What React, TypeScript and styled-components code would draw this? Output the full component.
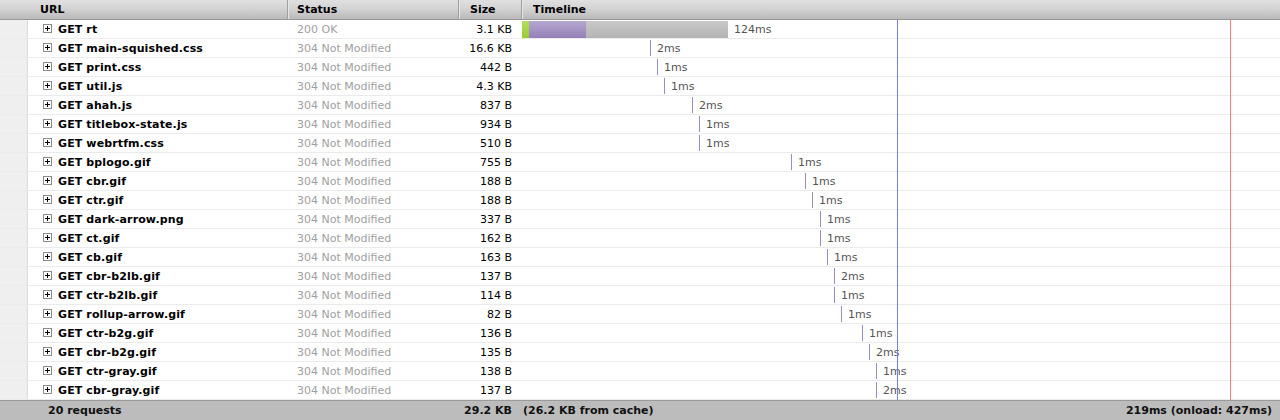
import React from "react";
import styled, { createGlobalStyle } from "styled-components";

const GlobalStyle = createGlobalStyle`
  html, body { margin: 0; padding: 0; background: #fff; }
  body {
    font-family: "DejaVu Sans", Verdana, sans-serif;
    font-size: 11px;
    color: #000;
  }
`;

const COLS = "28px 259px 171px 63px 1fr";
const TL_START = 521;

type Req = { url: string; status: string; size: string; x: number; label: string };

const rows: Req[] = [
  { url: "GET rt", status: "200 OK", size: "3.1 KB", x: 522, label: "124ms" },
  { url: "GET main-squished.css", status: "304 Not Modified", size: "16.6 KB", x: 650, label: "2ms" },
  { url: "GET print.css", status: "304 Not Modified", size: "442 B", x: 657, label: "1ms" },
  { url: "GET util.js", status: "304 Not Modified", size: "4.3 KB", x: 664, label: "1ms" },
  { url: "GET ahah.js", status: "304 Not Modified", size: "837 B", x: 692, label: "2ms" },
  { url: "GET titlebox-state.js", status: "304 Not Modified", size: "934 B", x: 699, label: "1ms" },
  { url: "GET webrtfm.css", status: "304 Not Modified", size: "510 B", x: 699, label: "1ms" },
  { url: "GET bplogo.gif", status: "304 Not Modified", size: "755 B", x: 791, label: "1ms" },
  { url: "GET cbr.gif", status: "304 Not Modified", size: "188 B", x: 805, label: "1ms" },
  { url: "GET ctr.gif", status: "304 Not Modified", size: "188 B", x: 812, label: "1ms" },
  { url: "GET dark-arrow.png", status: "304 Not Modified", size: "337 B", x: 820, label: "1ms" },
  { url: "GET ct.gif", status: "304 Not Modified", size: "162 B", x: 820, label: "1ms" },
  { url: "GET cb.gif", status: "304 Not Modified", size: "163 B", x: 827, label: "1ms" },
  { url: "GET cbr-b2lb.gif", status: "304 Not Modified", size: "137 B", x: 834, label: "2ms" },
  { url: "GET ctr-b2lb.gif", status: "304 Not Modified", size: "114 B", x: 834, label: "1ms" },
  { url: "GET rollup-arrow.gif", status: "304 Not Modified", size: "82 B", x: 841, label: "1ms" },
  { url: "GET ctr-b2g.gif", status: "304 Not Modified", size: "136 B", x: 862, label: "1ms" },
  { url: "GET cbr-b2g.gif", status: "304 Not Modified", size: "135 B", x: 869, label: "2ms" },
  { url: "GET ctr-gray.gif", status: "304 Not Modified", size: "138 B", x: 876, label: "1ms" },
  { url: "GET cbr-gray.gif", status: "304 Not Modified", size: "137 B", x: 876, label: "2ms" },
];

const Panel = styled.div`
  width: 1280px;
  height: 420px;
  overflow: hidden;
  display: flex;
  flex-direction: column;
`;

const HeaderRow = styled.div`
  display: grid;
  grid-template-columns: ${COLS};
  height: 19px;
  border-bottom: 1px solid #979797;
  background: linear-gradient(#e0e0e0, #d3d3d3 45%, #b9b9b9);
`;

const HeadCell = styled.div<{ $divider?: boolean; $pad?: number }>`
  display: flex;
  align-items: center;
  padding-left: ${(p) => p.$pad ?? 12}px;
  font-weight: bold;
  color: #000;
  border-left: ${(p) => (p.$divider ? "1px solid #a0a0a0" : "none")};
  box-shadow: ${(p) => (p.$divider ? "inset 1px 0 0 #e6e6e6" : "none")};
  white-space: nowrap;
`;

const Body = styled.div`
  position: relative;
  display: flex;
  flex-direction: column;
`;

const Row = styled.div`
  display: grid;
  grid-template-columns: ${COLS};
  height: 18px;
  border-bottom: 1px solid #ebebeb;
`;

const Gutter = styled.div`
  background: #efefef;
  border-right: 1px solid #dcdcdc;
`;

const UrlCell = styled.div`
  display: flex;
  align-items: center;
  padding-left: 15px;
  gap: 6px;
  font-weight: bold;
  letter-spacing: 0.12px;
  white-space: nowrap;
`;

const Twisty = styled.span`
  position: relative;
  width: 7px;
  height: 7px;
  border: 1px solid #8c8c8c;
  background: #fff;
  flex: none;
  margin-top: -1px;
  &::before, &::after {
    content: "";
    position: absolute;
    background: #000;
  }
  &::before { left: 1px; top: 3px; width: 5px; height: 1px; }
  &::after { left: 3px; top: 1px; width: 1px; height: 5px; }
`;

const StatusCell = styled.div`
  display: flex;
  align-items: center;
  padding-left: 10px;
  color: #a0a0a0;
  white-space: nowrap;
`;

const SizeCell = styled.div`
  display: flex;
  align-items: center;
  justify-content: flex-end;
  padding-right: 9px;
  color: #000;
  white-space: nowrap;
`;

const TimelineCell = styled.div`
  display: flex;
  align-items: stretch;
  white-space: nowrap;
`;

const Spacer = styled.div`
  flex: none;
`;

const Seg = styled.div<{ $w: number; $kind: "dns" | "recv" | "wait" }>`
  flex: none;
  width: ${(p) => p.$w}px;
  margin: 1px 0 0;
  height: 17px;
  background: ${(p) =>
    p.$kind === "dns"
      ? "linear-gradient(#b3e05c, #99cc33)"
      : p.$kind === "recv"
      ? "linear-gradient(#b4a8d0, #9580b8)"
      : "linear-gradient(#c8c8c8, #b4b4b4)"};
`;

const Tick = styled.div`
  flex: none;
  width: 1px;
  margin: 1px 0;
  background: #9d8cc4;
`;

const TimeLabel = styled.span`
  display: flex;
  align-items: center;
  margin-left: 6px;
  color: #555;
`;

const Marker = styled.div<{ $color: string }>`
  position: absolute;
  top: 0;
  bottom: 0;
  width: 1px;
  background: ${(p) => p.$color};
`;

const FooterRow = styled.div`
  display: grid;
  grid-template-columns: ${COLS};
  height: 19px;
  border-top: 1px solid #9a9a9a;
  background: #bcbcbc;
  font-weight: bold;
  color: #111;
`;

const FootCell = styled.div<{ $align?: "start" | "end"; $pl?: number; $pr?: number }>`
  display: flex;
  align-items: center;
  justify-content: ${(p) => (p.$align === "end" ? "flex-end" : "flex-start")};
  padding-left: ${(p) => p.$pl ?? 0}px;
  padding-right: ${(p) => p.$pr ?? 0}px;
  white-space: nowrap;
`;

const FootTimeline = styled.div`
  display: flex;
  align-items: center;
  justify-content: space-between;
  padding: 0 8px 0 2px;
  white-space: nowrap;
`;

export default function App() {
  return (
    <>
      <GlobalStyle />
      <Panel>
        <HeaderRow>
          <HeadCell />
          <HeadCell>URL</HeadCell>
          <HeadCell $divider $pad={9}>Status</HeadCell>
          <HeadCell $divider $pad={11}>Size</HeadCell>
          <HeadCell $divider $pad={11}>Timeline</HeadCell>
        </HeaderRow>
        <Body>
          {rows.map((r, i) => (
            <Row key={i}>
              <Gutter />
              <UrlCell>
                <Twisty />
                {r.url}
              </UrlCell>
              <StatusCell>{r.status}</StatusCell>
              <SizeCell>{r.size}</SizeCell>
              <TimelineCell>
                <Spacer style={{ width: r.x - TL_START }} />
                {i === 0 ? (
                  <>
                    <Seg $kind="dns" $w={7} />
                    <Seg $kind="recv" $w={57} />
                    <Seg $kind="wait" $w={142} />
                  </>
                ) : (
                  <Tick />
                )}
                <TimeLabel>{r.label}</TimeLabel>
              </TimelineCell>
            </Row>
          ))}
          <Marker $color="#7b7bf0" style={{ left: 897 }} />
          <Marker $color="#ff7b7b" style={{ left: 1230 }} />
        </Body>
        <FooterRow>
          <FootCell />
          <FootCell $pl={20}>20 requests</FootCell>
          <FootCell />
          <FootCell $align="end" $pr={9}>29.2 KB</FootCell>
          <FootTimeline>
            <span>(26.2 KB from cache)</span>
            <span>219ms (onload: 427ms)</span>
          </FootTimeline>
        </FooterRow>
      </Panel>
    </>
  );
}
